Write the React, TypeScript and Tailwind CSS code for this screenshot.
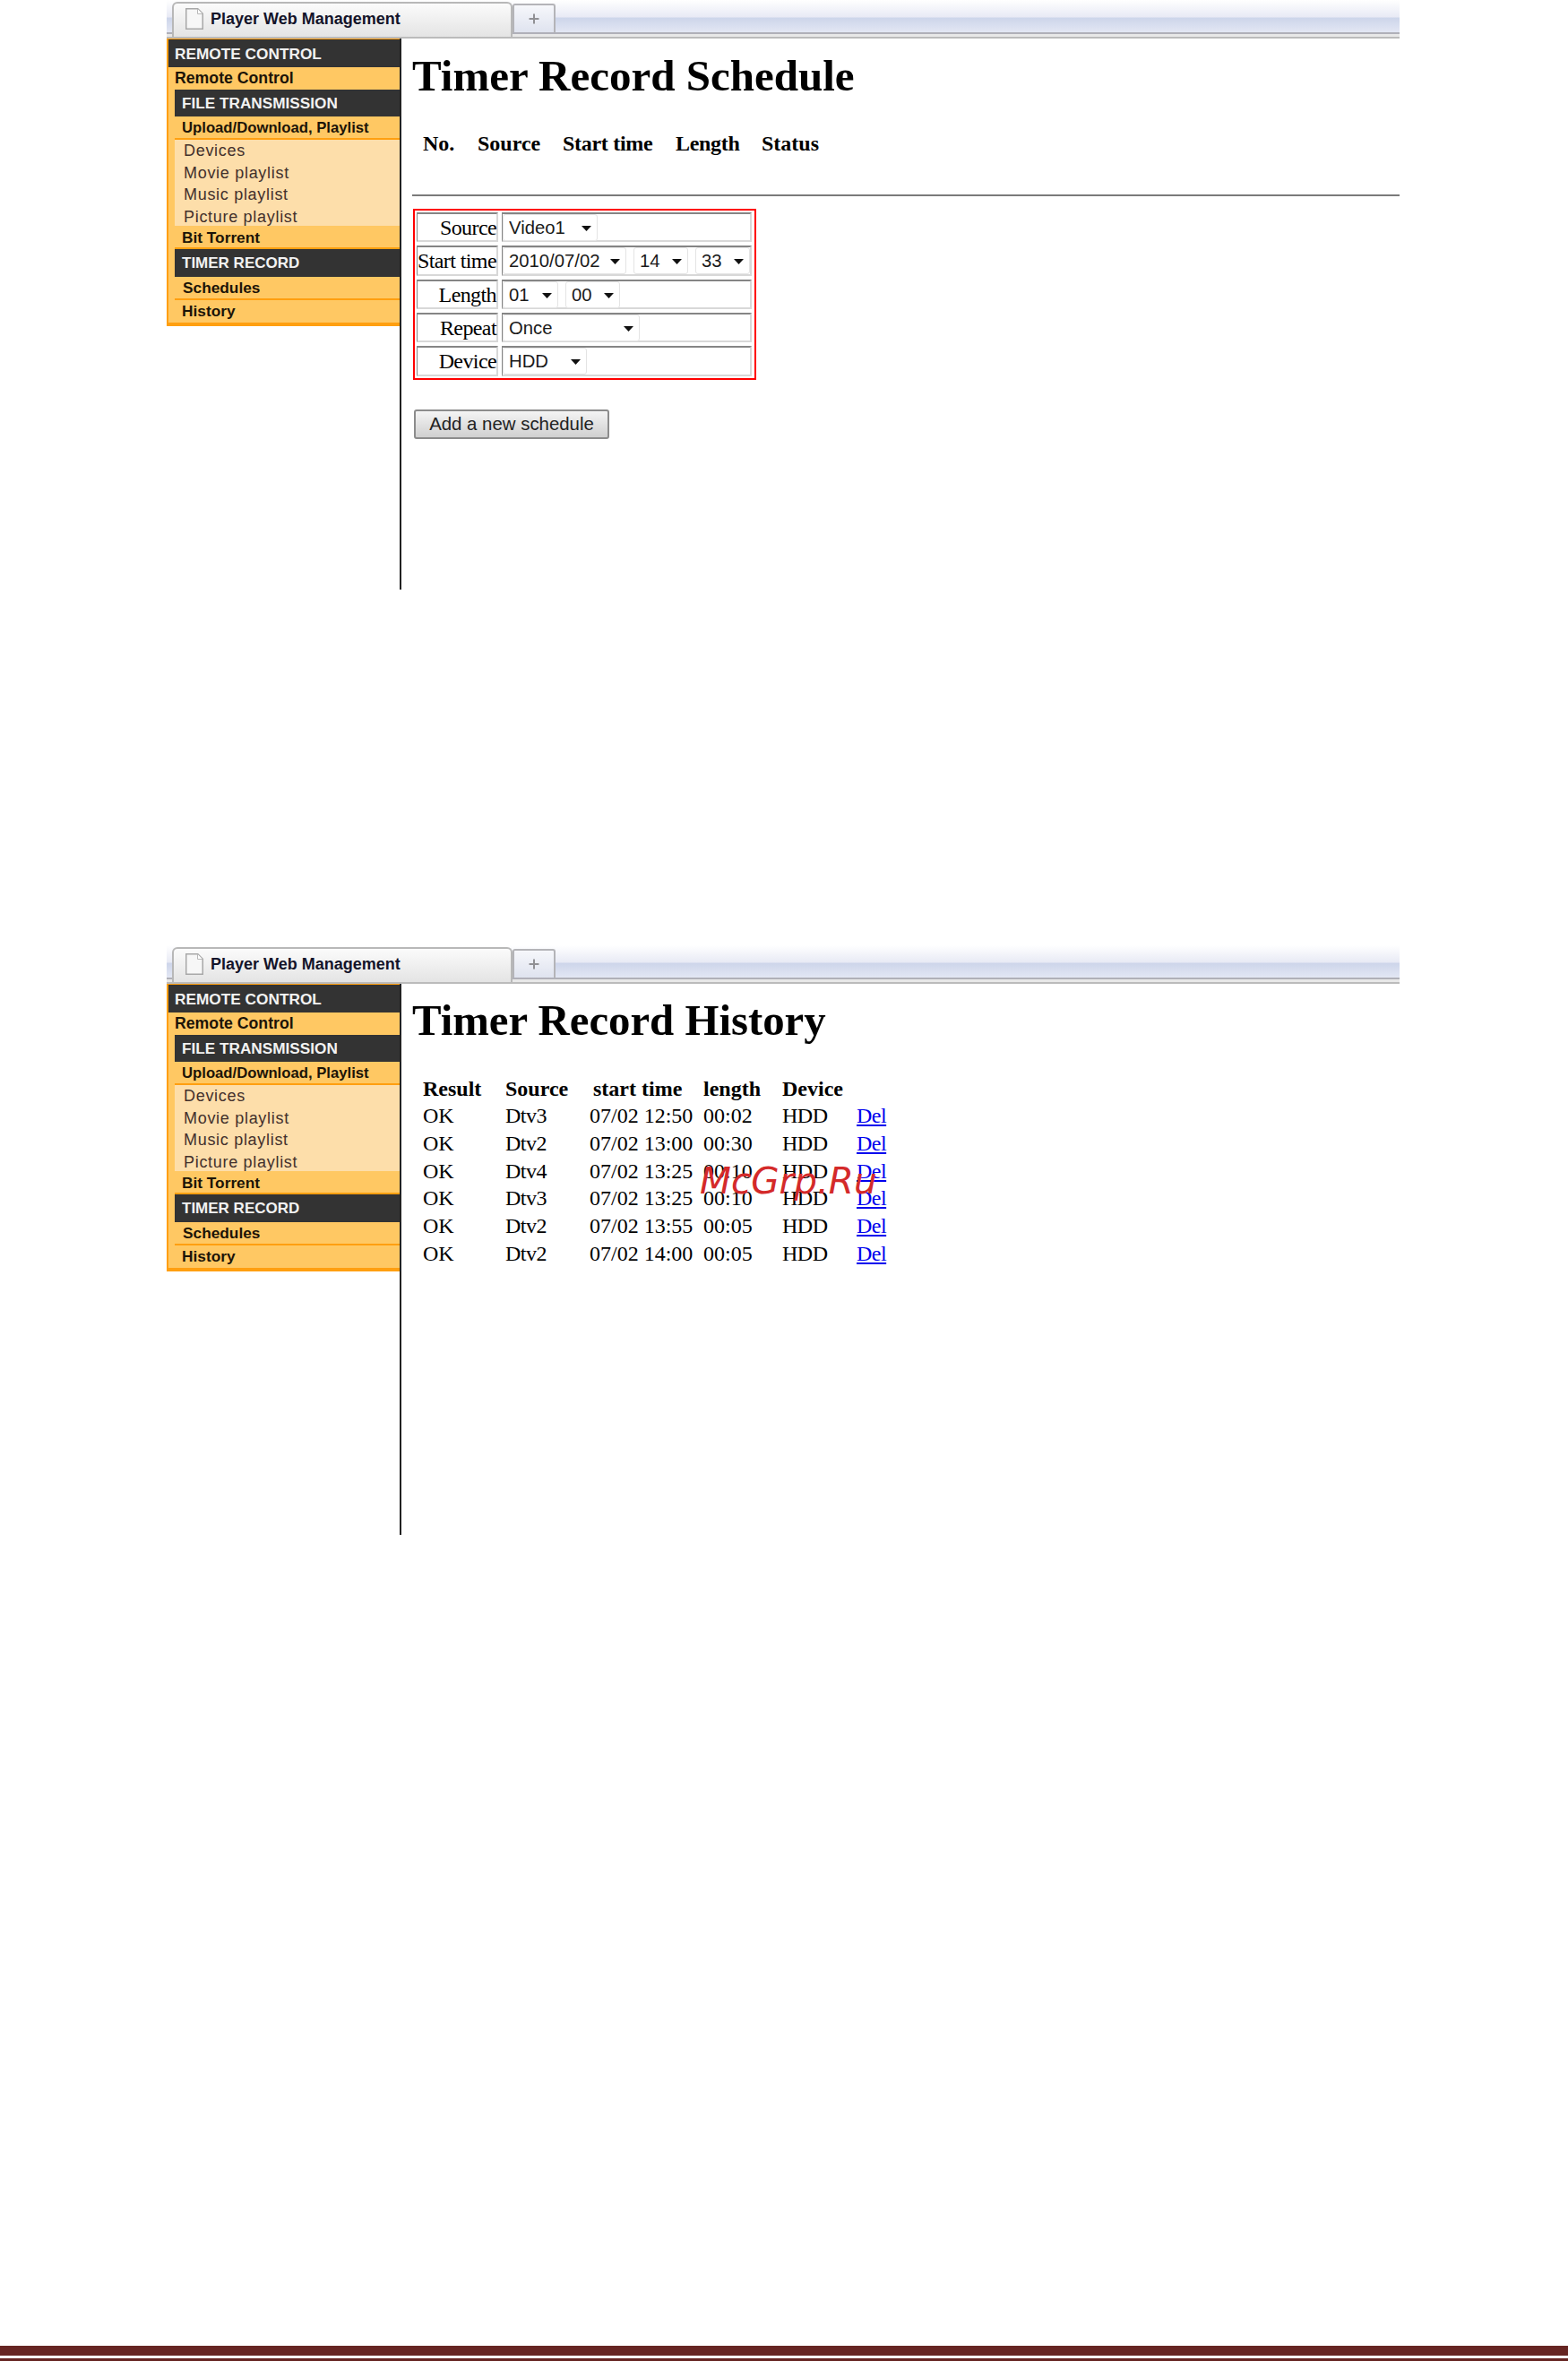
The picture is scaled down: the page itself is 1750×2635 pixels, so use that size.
import { Plus } from 'lucide-react';

const sans = "font-['Liberation_Sans',Arial,sans-serif]";
const serif = "font-['Liberation_Serif','Times_New_Roman',serif]";

const playlistLinks = ['Devices', 'Movie playlist', 'Music playlist', 'Picture playlist'];

const formRows = [
  { label: 'Source', height: 'h-[33px]', selects: [{ value: 'Video1', width: 'w-[106px]' }] },
  {
    label: 'Start time',
    height: 'h-[34px]',
    selects: [
      { value: '2010/07/02', width: 'w-[138px]' },
      { value: '14', width: 'w-[61px]' },
      { value: '33', width: 'w-[61px]' },
    ],
  },
  {
    label: 'Length',
    height: 'h-[33px]',
    selects: [
      { value: '01', width: 'w-[62px]' },
      { value: '00', width: 'w-[61px]' },
    ],
  },
  { label: 'Repeat', height: 'h-[33px]', selects: [{ value: 'Once', width: 'w-[153px]' }] },
  { label: 'Device', height: 'h-[34px]', selects: [{ value: 'HDD', width: 'w-[94px]' }] },
];

const historyRows = [
  ['OK', 'Dtv3', '07/02 12:50', '00:02', 'HDD'],
  ['OK', 'Dtv2', '07/02 13:00', '00:30', 'HDD'],
  ['OK', 'Dtv4', '07/02 13:25', '00:10', 'HDD'],
  ['OK', 'Dtv3', '07/02 13:25', '00:10', 'HDD'],
  ['OK', 'Dtv2', '07/02 13:55', '00:05', 'HDD'],
  ['OK', 'Dtv2', '07/02 14:00', '00:05', 'HDD'],
];

const BrowserTabs = () => (
  <div className="h-[43px]">
    <div className="flex h-[36px] items-start bg-[linear-gradient(#ffffff_0,#e8eaf5_19px,#cdd5ea_20px,#e3e7f4_36px)] pl-[6px] pt-[2px]">
      <div className="z-10 flex h-[39px] w-[380px] shrink-0 items-center rounded-t-[6px] border-2 border-b-0 border-[#b8b8b8] bg-[linear-gradient(#fbfbfb,#e4e4e4)] pb-[3px] pl-[13px]">
        <svg width="20" height="24" viewBox="0 0 20 24" className="shrink-0">
          <path d="M.75.75h13l5.5 5.5v17H.75z" fill="#f7f7f7" stroke="#a8a8a8" strokeWidth="1.5" />
          <path d="M13.5 1v5.5H19" fill="#fff" stroke="#b8b8b8" />
        </svg>
        <span className={`${sans} ml-[8px] text-[18px] font-bold text-[#14142a]`}>Player Web Management</span>
      </div>
      <div className="mt-[2px] flex h-[32px] w-[48px] shrink-0 items-center justify-center rounded-t-[3px] border-2 border-b-0 border-[#b4b4b8] bg-[linear-gradient(#f6f7fb,#dfe3ef)]">
        <Plus size={16} strokeWidth={3} className="text-[#909094]" />
      </div>
    </div>
    <div className="h-[7px] border-t-2 border-b-2 border-t-[#b0b0b8] border-b-[#bbbbbb] bg-[#e8e8e8]" />
  </div>
);

const DarkHeading = ({ title, size, box }: { title: string; size: string; box: string }) => (
  <div className={`${sans} ${box} ${size} flex items-center bg-[#333333] font-bold text-[#f2f2f2]`}>{title}</div>
);

const SideItem = ({ title, pad, height, size = 'text-[17.3px]', border }: { title: string; pad: string; height: string; size?: string; border?: boolean }) => (
  <div className={`${sans} ${pad} ${height} ${size} flex items-center font-bold text-[#1c1408] ${border ? 'border-b-2 border-[#ff9f10]' : ''}`}>
    {title}
  </div>
);

const Sidebar = () => (
  <aside className="h-[321px] w-[260px] shrink-0 border-t border-b-4 border-l-2 border-[#ff9f10] bg-[#ffc863]">
    <DarkHeading title="REMOTE CONTROL" size="text-[17.25px]" box="h-[31px] pl-[7px] pt-[2px]" />
    <SideItem title="Remote Control" pad="pl-[7px]" height="h-[25px]" size="text-[17.7px]" />
    <div className="ml-[7px]">
      <DarkHeading title="FILE TRANSMISSION" size="text-[17.2px]" box="h-[30px] pl-[8px] pt-[1px]" />
      <SideItem title="Upload/Download, Playlist" pad="pl-[8px] pt-[2px]" height="h-[26px]" size="text-[16.7px]" border />
      <div className="flex h-[96px] flex-col justify-center bg-[#fddeaa] pl-[10px] pt-[3px]">
        {playlistLinks.map((link) => (
          <div key={link} className={`${sans} flex h-[24.5px] shrink-0 items-center text-[18px] tracking-[0.7px] text-[#43302c]`}>
            {link}
          </div>
        ))}
      </div>
      <SideItem title="Bit Torrent" pad="pl-[8px] pt-[3px]" height="h-[26px]" border />
      <DarkHeading title="TIMER RECORD" size="text-[17px]" box="h-[31px] pl-[8px]" />
      <SideItem title="Schedules" pad="pl-[9px] pt-[2px]" height="h-[26px]" border />
      <SideItem title="History" pad="pl-[8px]" height="h-[25px]" />
    </div>
  </aside>
);

const Select = ({ value, width }: { value: string; width: string }) => (
  <div className={`relative h-[30px] rounded-[3px] border border-[#e4e4e4] bg-white ${width}`}>
    <select
      defaultValue={value}
      className={`${sans} block h-[28px] w-full appearance-none bg-transparent pl-[6px] text-[20.3px] leading-[24px] text-[#1a1a1a] outline-none`}
    >
      <option>{value}</option>
    </select>
    <svg width="11" height="6" viewBox="0 0 11 6" className="pointer-events-none absolute top-[12px] right-[6px]">
      <path d="M0 0h11L5.5 6z" fill="#111" />
    </svg>
  </div>
);

const ScheduleContent = () => (
  <div className={`${serif} text-black`}>
    <h1 className="ml-[12px] h-[55px] text-[49px] leading-[55px] font-bold whitespace-nowrap">Timer Record Schedule</h1>
    <table className="mt-[30px] ml-[24px] text-[24px] font-bold">
      <thead>
        <tr className="h-[36px]">
          <th className="w-[61px] text-left font-bold">No.</th>
          <th className="w-[95px] text-left font-bold">Source</th>
          <th className="w-[126px] text-left font-bold tracking-[-0.3px]">Start time</th>
          <th className="w-[96px] text-left font-bold tracking-[-0.3px]">Length</th>
          <th className="text-left font-bold">Status</th>
        </tr>
      </thead>
    </table>
    <hr className="mt-[39px] ml-[12px] h-[2px] border-0 bg-[#7a7a7a]" />
    <div className="mt-[14px] ml-[13px] grid w-[383px] grid-cols-[91px_279px] gap-x-[4px] gap-y-[4px] border-2 border-[#ff0000] p-[2px] text-[24px]">
      {formRows.map((row) => (
        <div key={row.label} className="contents">
          <div className={`${row.height} flex items-center justify-end border-2 border-l border-t-[#858585] border-r-[#d8d8d8] border-b-[#d8d8d8] border-l-[#858585] tracking-[-0.6px] whitespace-nowrap`}>
            {row.label}
          </div>
          <div className={`${row.height} flex items-center gap-[8px] border-2 border-l border-t-[#858585] border-r-[#d8d8d8] border-b-[#d8d8d8] border-l-[#858585]`}>
            {row.selects.map((s) => (
              <Select key={s.value} value={s.value} width={s.width} />
            ))}
          </div>
        </div>
      ))}
    </div>
    <button className={`${sans} mt-[33px] ml-[14px] h-[33px] w-[218px] rounded-[3px] border-2 border-[#8c8c8c] bg-[linear-gradient(#f4f4f4,#d0d0d0)] text-[20.4px] leading-none text-[#222]`}>
      Add a new schedule
    </button>
  </div>
);

const HistoryContent = () => (
  <div className={`${serif} relative text-black`}>
    <h1 className="ml-[12px] h-[55px] text-[48.8px] leading-[55px] font-bold whitespace-nowrap">Timer Record History</h1>
    <table className="mt-[33px] ml-[24px] table-fixed text-left text-[24px] leading-[27px]">
      <thead>
        <tr className="h-[30.67px]">
          <th className="w-[92px] font-bold">Result</th>
          <th className="w-[94px] font-bold">Source</th>
          <th className="w-[127px] pl-[4px] font-bold">start time</th>
          <th className="w-[88px] font-bold">length</th>
          <th className="w-[83px] font-bold">Device</th>
          <th className="w-[50px]" />
        </tr>
      </thead>
      <tbody>
        {historyRows.map((row, i) => (
          <tr key={i} className="h-[30.67px]">
            {row.map((cell, j) => (
              <td key={j} className={j === 1 || j === 4 ? 'tracking-[-0.5px]' : ''}>
                {cell}
              </td>
            ))}
            <td>
              <a href="#" className="tracking-[-0.5px] text-[#0000ee] underline">
                Del
              </a>
            </td>
          </tr>
        ))}
      </tbody>
    </table>
    <span className="absolute top-[186px] left-[333px] font-['DejaVu_Sans',sans-serif] text-[40.5px] leading-none text-[#d42a2a] italic">
      McGrp.Ru
    </span>
  </div>
);

const BrowserWindow = ({ children }: { children: React.ReactNode }) => (
  <div className="ml-[186px] h-[658px] w-[1376px]">
    <BrowserTabs />
    <div className="flex h-[615px]">
      <Sidebar />
      <main className="flex-1 border-l-2 border-[#222222] pt-[14px]">{children}</main>
    </div>
  </div>
);

export default function App() {
  return (
    <div className="h-[2635px] w-[1750px] overflow-hidden bg-white">
      <BrowserWindow>
        <ScheduleContent />
      </BrowserWindow>
      <div className="mt-[397px]">
        <BrowserWindow>
          <HistoryContent />
        </BrowserWindow>
      </div>
      <footer className="mt-[905px]">
        <div className="h-[11px] bg-[#662522]" />
        <div className="mt-[3px] h-[3px] bg-[#662522]" />
      </footer>
    </div>
  );
}
